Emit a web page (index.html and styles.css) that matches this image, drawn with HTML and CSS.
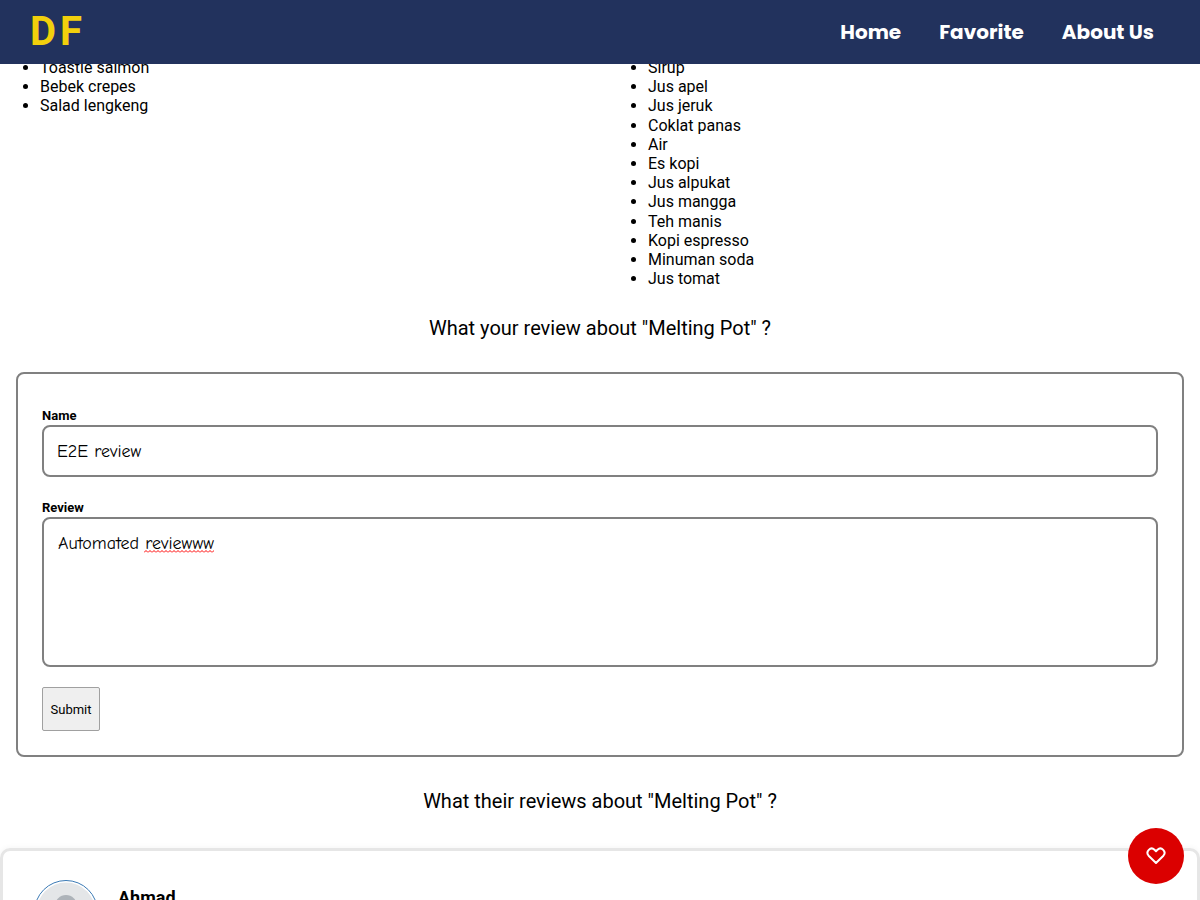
FILE: index.html
```html
<!DOCTYPE html>
<html lang="en">
<head>
<meta charset="utf-8">
<meta name="viewport" content="width=device-width, initial-scale=1">
<title>Melting Pot</title>
<link rel="stylesheet" href="styles.css">
</head>
<body>
<header class="app-bar">
  <a class="brand" href="#">DF</a>
  <nav class="nav">
    <a href="#">Home</a>
    <a href="#">Favorite</a>
    <a href="#">About Us</a>
  </nav>
</header>
<main class="content">
  <section class="menus">
    <ul class="menu">
      <li>Toastie salmon</li>
      <li>Bebek crepes</li>
      <li>Salad lengkeng</li>
    </ul>
    <ul class="menu">
      <li>Sirup</li>
      <li>Jus apel</li>
      <li>Jus jeruk</li>
      <li>Coklat panas</li>
      <li>Air</li>
      <li>Es kopi</li>
      <li>Jus alpukat</li>
      <li>Jus mangga</li>
      <li>Teh manis</li>
      <li>Kopi espresso</li>
      <li>Minuman soda</li>
      <li>Jus tomat</li>
    </ul>
  </section>
  <h2 class="heading">What your review about "Melting Pot" ?</h2>
  <form class="review-form">
    <label class="label" for="name">Name</label>
    <input class="field" id="name" type="text" value="E2E review">
    <label class="label" for="review">Review</label>
    <div class="review-box">
      <textarea class="field area" id="review" spellcheck="false">Automated reviewww</textarea>
      <svg class="squiggle" width="70" height="3" aria-hidden="true">
        <defs><pattern id="wave" width="4" height="3" patternUnits="userSpaceOnUse"><path d="M0 2.5L2 .5L4 2.5" fill="none" stroke="#f00"/></pattern></defs>
        <rect width="70" height="3" fill="url(#wave)"/>
      </svg>
    </div>
    <button class="submit" type="button">Submit</button>
  </form>
  <h2 class="heading heading-reviews">What their reviews about "Melting Pot" ?</h2>
  <article class="card">
    <svg class="avatar" viewBox="0 0 64 64" aria-hidden="true">
      <defs><clipPath id="face"><circle cx="32" cy="32" r="29.5"/></clipPath></defs>
      <circle cx="32" cy="32" r="31.5" fill="#fff" stroke="#3b7ab5"/>
      <g clip-path="url(#face)">
        <rect width="64" height="64" fill="#e4e6e8"/>
        <circle cx="32" cy="26" r="11" fill="#adb3b9"/>
        <ellipse cx="32" cy="56" rx="22" ry="16" fill="#adb3b9"/>
      </g>
    </svg>
    <h3 class="reviewer">Ahmad</h3>
  </article>
</main>
<button class="like" type="button" aria-label="Like this restaurant">
  <svg width="20" height="18" viewBox="0 0 20 18" aria-hidden="true"><path d="M10 16L2.600 8.700C-.8 4.800 4.500-.9 8.500 2.700L10 4.200L11.500 2.700C15.500-.9 20.800 4.800 17.400 8.700Z" fill="none" stroke="#fff" stroke-width="2" stroke-linejoin="round"/></svg>
</button>
</body>
</html>
```
FILE: styles.css
```css
* { box-sizing: border-box; }
body {
  margin: 0;
  background: #fff;
  color: #000;
  font-family: Roboto, sans-serif;
  font-size: 16px;
  line-height: 1.2;
}
.app-bar {
  position: fixed;
  inset: 0 0 auto;
  z-index: 2;
  height: 64px;
  padding: 0 46px 0 30px;
  display: flex;
  align-items: center;
  justify-content: space-between;
  background: #22325d;
}
.app-bar a { text-decoration: none; }
.brand {
  color: #f2d00c;
  font-size: 40px;
  font-weight: 700;
  letter-spacing: 4px;
}
.nav { display: flex; gap: 38px; }
.nav a {
  color: #fff;
  font-family: Poppins, Inter, sans-serif;
  font-size: 20px;
  font-weight: 700;
}
.content {
  height: 100vh;
  padding-top: 58px;
  overflow: hidden;
}
.menus {
  display: grid;
  grid-template-columns: 1fr 1fr;
  gap: 16px;
}
.menu { margin: 0; padding-left: 40px; }
.heading {
  margin: 28px 0 32px;
  font-size: 20px;
  font-weight: 400;
  text-align: center;
}
.heading-reviews { margin: 32px 0 35px; }
.review-form {
  margin: 0 16px;
  padding: 33px 24px 24px;
  display: flex;
  flex-direction: column;
  align-items: stretch;
  border: 2px solid #808080;
  border-radius: 8px;
}
.label { font-size: 13px; font-weight: 700; line-height: 18px; }
.field {
  display: block;
  width: 100%;
  height: 52px;
  margin: 0 0 22px;
  padding: 13px;
  border: 2px solid #808080;
  border-radius: 8px;
  background: #fff;
  color: #000;
  font-family: "Comic Sans MS", "Comic Neue", "Open Sans", sans-serif;
  font-size: 18px;
}
.review-box { position: relative; }
.area { height: 150px; margin-bottom: 20px; padding: 14px; resize: none; }
.squiggle { position: absolute; left: 102px; top: 33px; }
.submit {
  align-self: flex-start;
  width: 58px;
  height: 44px;
  padding: 0;
  border: 1px solid #a0a0a0;
  border-radius: 2px;
  background: #efefef;
  color: #000;
  font-family: Roboto, sans-serif;
  font-size: 13px;
}
.card {
  padding: 29px 31px;
  display: flex;
  gap: 20px;
  border: 3px solid #e6e6e6;
  border-radius: 10px;
  box-shadow: 0 0 6px #0000000d;
}
.avatar { width: 64px; height: 64px; }
.reviewer { margin: 7px 0 0; font-size: 18px; font-weight: 700; }
.like {
  position: fixed;
  right: 16px;
  bottom: 16px;
  width: 56px;
  height: 56px;
  padding: 0;
  display: grid;
  place-items: center;
  border: 0;
  border-radius: 50%;
  background: #db0000;
}
```
